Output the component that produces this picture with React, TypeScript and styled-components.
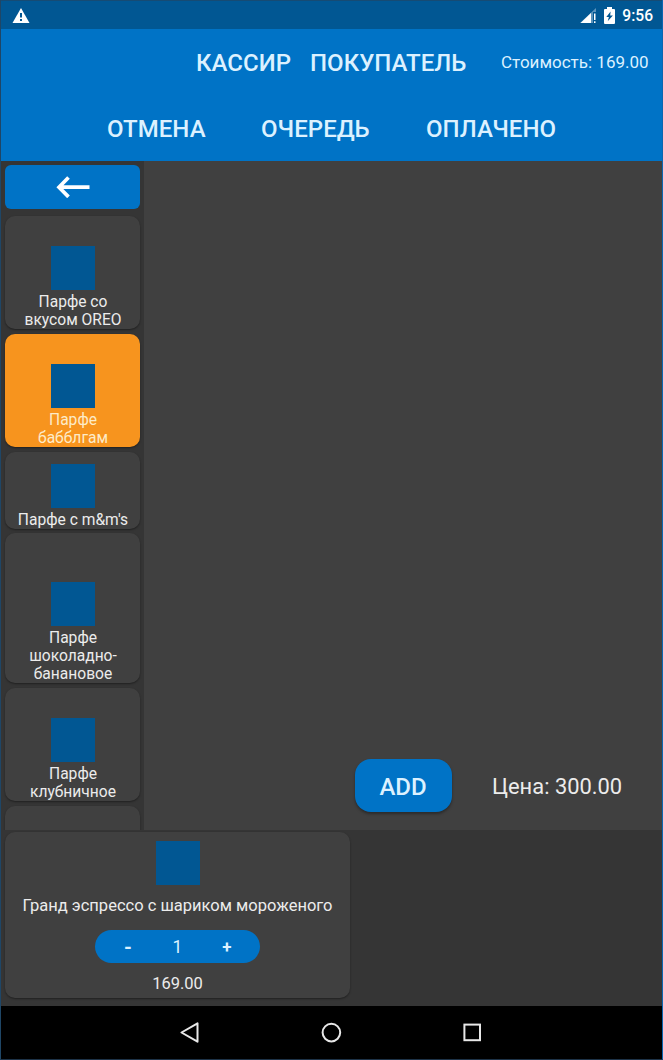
import React from 'react';
import styled, { createGlobalStyle } from 'styled-components';

const GlobalStyle = createGlobalStyle`
  * { box-sizing: border-box; }
  body { margin: 0; background: #353535; }
  button { font: inherit; color: inherit; border: 0; padding: 0; background: none; }
`;

const Screen = styled.div`
  display: flex;
  flex-direction: column;
  width: 663px;
  height: 1060px;
  overflow: hidden;
  background: #353535;
  border-left: 1px solid #1f4666;
  border-right: 1px solid #0b66b0;
  border-bottom: 1px solid #1d3348;
  font-family: Roboto, "Liberation Sans", sans-serif;
  color: #ececec;
`;

const StatusBar = styled.div`
  display: flex;
  align-items: center;
  height: 29px;
  flex: none;
  padding: 1px 9px 0 11px;
  background: #015793;
  border-top: 1px solid #164b74;
  color: #fff;
`;

const StatusIcons = styled.div`
  display: flex;
  align-items: center;
  gap: 7px;
  margin-left: auto;
`;

const Clock = styled.span`
  font-size: 15.6px;
  font-weight: 500;
  line-height: 20px;
`;

const Header = styled.header`
  flex: none;
  height: 132px;
  background: #0073c6;
  color: #dcf1ff;
`;

const HeaderRow = styled.div<{ $left: number; $gap: number }>`
  display: flex;
  align-items: center;
  height: 66px;
  padding-top: 2px;
  padding-left: ${(p) => p.$left}px;
  gap: ${(p) => p.$gap}px;
`;

const HeaderButton = styled.button<{ $w: number }>`
  width: ${(p) => p.$w}px;
  font-size: 24px;
  font-weight: 500;
  line-height: 28px;
  letter-spacing: 0.05px;
  white-space: nowrap;
  text-align: left;
`;

const Total = styled.span`
  margin: -2px 0 0 17px;
  font-size: 17px;
  line-height: 22px;
  white-space: nowrap;
`;

const Workspace = styled.div`
  display: flex;
  flex: none;
  height: 669px;
`;

const Sidebar = styled.aside`
  width: 143px;
  height: 100%;
  padding: 4px 4px 0;
  overflow: hidden;
  background: #353535;
`;

const BackButton = styled.button`
  display: flex;
  align-items: center;
  justify-content: center;
  width: 135px;
  height: 44px;
  margin-bottom: 7px;
  border-radius: 6px;
  background: #0073c6;
`;

const ProductCard = styled.div<{ $top: number; $gap: number; $active?: boolean }>`
  display: flex;
  flex-direction: column;
  align-items: center;
  width: 135px;
  padding: ${(p) => p.$top}px 0 3px;
  margin-bottom: ${(p) => p.$gap}px;
  border-radius: 10px;
  background: ${(p) => (p.$active ? '#f7941e' : '#404040')};
  box-shadow: 0 1px 2px rgba(0, 0, 0, 0.4);
  color: ${(p) => (p.$active ? '#fdebc8' : '#ececec')};
`;

const Thumb = styled.div`
  width: 44px;
  height: 44px;
  flex: none;
  background: #015793;
`;

const ProductName = styled.div`
  font-size: 15.6px;
  line-height: 18px;
  padding: 3px 0 0 1px;
  margin-bottom: -3px;
  text-align: center;
  white-space: pre;
`;

const Details = styled.main`
  display: flex;
  flex: 1;
  align-items: flex-end;
  padding: 0 0 18px 211px;
  background: #404040;
`;

const AddButton = styled.button`
  width: 97px;
  height: 53px;
  padding: 3px 1px 0 0;
  border-radius: 16px;
  background: #0073c6;
  color: #dcf1ff;
  font-size: 24px;
  font-weight: 500;
  line-height: 50px;
  box-shadow: 0 2px 3px rgba(0, 0, 0, 0.35);
`;

const Price = styled.span`
  margin-left: 40px;
  padding-top: 3px;
  font-size: 21.9px;
  line-height: 50px;
  white-space: nowrap;
`;

const Cart = styled.section`
  flex: none;
  height: 176px;
  padding: 2px 4px;
  background: #353535;
`;

const CartItem = styled.div`
  display: flex;
  flex-direction: column;
  align-items: center;
  width: 345px;
  height: 166px;
  padding-top: 9px;
  border-radius: 10px;
  background: #404040;
  box-shadow: 0 1px 2px rgba(0, 0, 0, 0.4);
`;

const CartText = styled.div<{ $mt: number }>`
  margin-top: ${(p) => p.$mt}px;
  font-size: 16.5px;
  line-height: 20px;
  white-space: nowrap;
`;

const Stepper = styled.div`
  display: grid;
  grid-template-columns: 66px 33px 66px;
  justify-items: center;
  align-items: center;
  width: 165px;
  height: 33px;
  margin-top: 14px;
  border-radius: 17px;
  background: #0073c6;
  color: #dcf1ff;
  font-size: 17.5px;
`;

const StepButton = styled.button<{ $size: number }>`
  font-weight: 700;
  font-size: ${(p) => p.$size}px;
  line-height: 20px;
`;

const NavBar = styled.nav`
  display: flex;
  align-items: center;
  flex: 1;
  padding-left: 178px;
  gap: 119px;
  background: #000;
  svg { display: block; }
`;

const WarningIcon = () => (
  <svg width="18" height="16" viewBox="0 0 18 16">
    <path d="M9 0 17.5 15H.5z" fill="#fff" />
    <path d="M8 5h2v4.5H8zM8 11h2v2H8z" fill="#015793" />
  </svg>
);

const SignalIcon = () => (
  <svg width="17" height="16" viewBox="0 0 17 16">
    <path d="M16 0v4h-3v11H0z" fill="#5d93bb" />
    <path d="M11 5v10H0.5z" fill="#fff" />
    <path d="M14 5.5h1.5v6.5H14zM14 13.3h1.5V15H14z" fill="#fff" />
  </svg>
);

const BatteryIcon = () => (
  <svg width="11" height="17" viewBox="0 0 11 17">
    <path d="M3 0h5v2h2q1 0 1 1v13q0 1-1 1H1q-1 0-1-1V3q0-1 1-1h2z" fill="#fff" />
    <path d="M6.6 4.6 2.3 10h2.6l-1.2 4.2L8.9 8.6H6.2z" fill="#015793" />
  </svg>
);

const ArrowIcon = () => (
  <svg width="34" height="22" viewBox="0 0 34 22" fill="none" stroke="#fff" strokeWidth="3.7">
    <path d="M33.5 11.2H3M12.5 1.5 3 11.2l9.5 9.7" />
  </svg>
);

const products = [
  { name: 'Парфе со\nвкусом OREO', top: 30, gap: 5 },
  { name: 'Парфе\nбабблгам', top: 30, gap: 5, active: true },
  { name: "Парфе с m&m's", top: 12, gap: 4 },
  { name: 'Парфе\nшоколадно-\nбанановое', top: 49, gap: 5 },
  { name: 'Парфе\nклубничное', top: 30, gap: 5 },
];

export default function App() {
  return (
    <>
      <GlobalStyle />
      <Screen>
        <StatusBar>
          <WarningIcon />
          <StatusIcons>
            <SignalIcon />
            <BatteryIcon />
            <Clock>9:56</Clock>
          </StatusIcons>
        </StatusBar>
        <Header>
          <HeaderRow $left={195} $gap={18}>
            <HeaderButton $w={96}>КАССИР</HeaderButton>
            <HeaderButton $w={156}>ПОКУПАТЕЛЬ</HeaderButton>
            <Total>Стоимость: 169.00</Total>
          </HeaderRow>
          <HeaderRow $left={106} $gap={56}>
            <HeaderButton $w={98}>ОТМЕНА</HeaderButton>
            <HeaderButton $w={109}>ОЧЕРЕДЬ</HeaderButton>
            <HeaderButton $w={130}>ОПЛАЧЕНО</HeaderButton>
          </HeaderRow>
        </Header>
        <Workspace>
          <Sidebar>
            <BackButton aria-label="Назад">
              <ArrowIcon />
            </BackButton>
            {products.map((p) => (
              <ProductCard key={p.name} $top={p.top} $gap={p.gap} $active={p.active}>
                <Thumb />
                <ProductName>{p.name}</ProductName>
              </ProductCard>
            ))}
            <ProductCard $top={49} $gap={0} />
          </Sidebar>
          <Details>
            <AddButton>ADD</AddButton>
            <Price>Цена: 300.00</Price>
          </Details>
        </Workspace>
        <Cart>
          <CartItem>
            <Thumb />
            <CartText $mt={11}>Гранд эспрессо с шариком мороженого</CartText>
            <Stepper>
              <StepButton $size={20}>-</StepButton>
              <span>1</span>
              <StepButton $size={17}>+</StepButton>
            </Stepper>
            <CartText $mt={11}>169.00</CartText>
          </CartItem>
        </Cart>
        <NavBar>
          <svg width="22" height="22" viewBox="0 0 22 22" fill="none" stroke="#e8e8e8" strokeWidth="2" strokeLinejoin="round">
            <path d="M18.5 1.3v18.4L2.5 10.5z" />
          </svg>
          <svg width="22" height="22" viewBox="0 0 22 22" fill="none" stroke="#e8e8e8" strokeWidth="2">
            <circle cx="11.4" cy="10.6" r="8.8" />
          </svg>
          <svg width="22" height="22" viewBox="0 0 22 22" fill="none" stroke="#e8e8e8" strokeWidth="2">
            <rect x="3.4" y="2.6" width="15.6" height="15.6" />
          </svg>
        </NavBar>
      </Screen>
    </>
  );
}
